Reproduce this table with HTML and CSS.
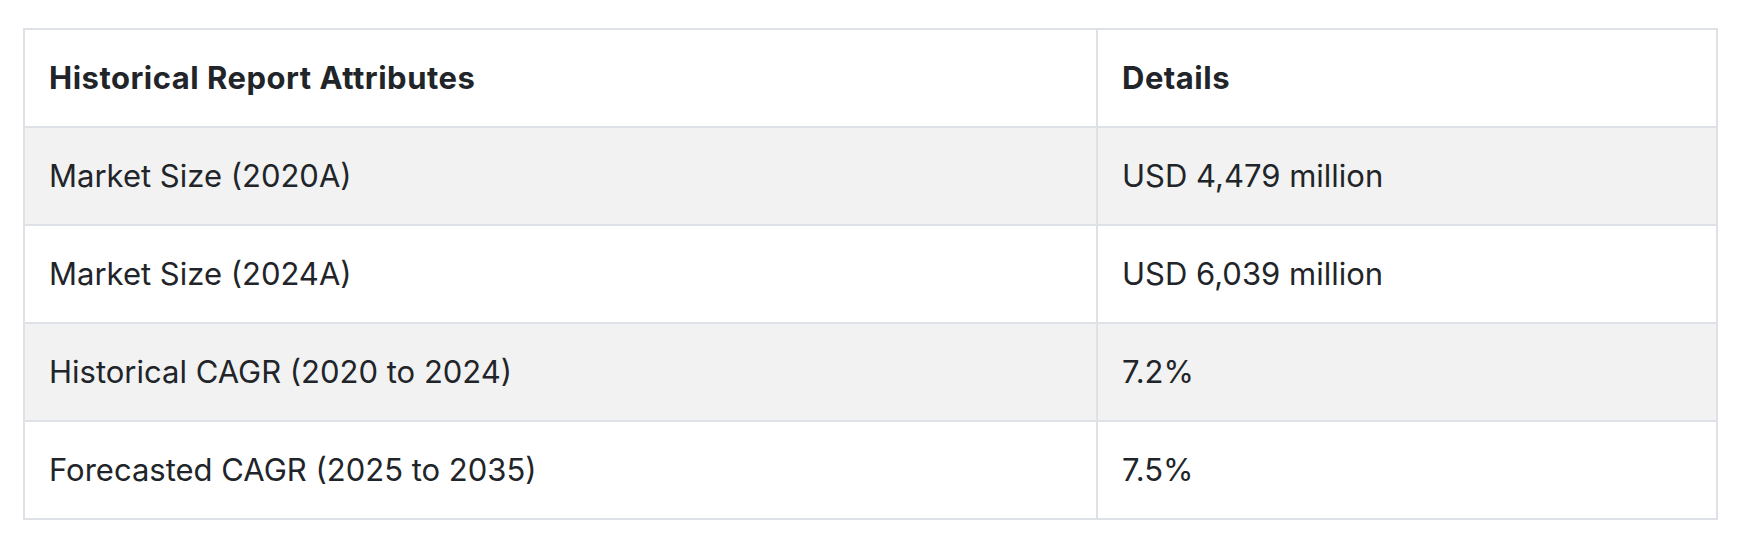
FILE: index.html
```html
<!DOCTYPE html>
<html lang="en">
<head>
<meta charset="utf-8">
<title>Historical Report Attributes</title>
<link rel="stylesheet" href="styles.css">
</head>
<body>
<div class="wrap">
  <table class="report">
    <thead>
      <tr><th class="col-attr">Historical Report Attributes</th><th>Details</th></tr>
    </thead>
    <tbody>
      <tr class="odd"><td>Market Size (2020A)</td><td>USD 4,479 million</td></tr>
      <tr><td>Market Size (2024A)</td><td>USD 6,039 million</td></tr>
      <tr class="odd"><td>Historical CAGR (2020 to 2024)</td><td>7.2%</td></tr>
      <tr><td>Forecasted CAGR (2025 to 2035)</td><td>7.5%</td></tr>
    </tbody>
  </table>
</div>
</body>
</html>
```

FILE: styles.css
```css
html, body {
  margin: 0;
  padding: 0;
  background: #ffffff;
}
body {
  font-family: Inter, "Liberation Sans", sans-serif;
  color: #212529;
}
.wrap {
  padding: 28px 0 0 23px;
}
.report {
  width: 1695px;
  table-layout: fixed;
  border-collapse: separate;
  border-spacing: 0;
  border-top: 2px solid #dee2e6;
  border-left: 2px solid #dee2e6;
  font-size: 31px;
  line-height: 48px;
}
.report th,
.report td {
  box-sizing: border-box;
  padding: 24px 24px;
  text-align: left;
  vertical-align: middle;
  border-right: 2px solid #dee2e6;
  border-bottom: 2px solid #dee2e6;
  white-space: nowrap;
}
.report th {
  font-weight: 700;
  letter-spacing: 0.5px;
}
.report .col-attr {
  width: 1073px;
}
.report td {
  font-weight: 400;
}
.report tr.odd td {
  background: #f2f2f2;
}
```
